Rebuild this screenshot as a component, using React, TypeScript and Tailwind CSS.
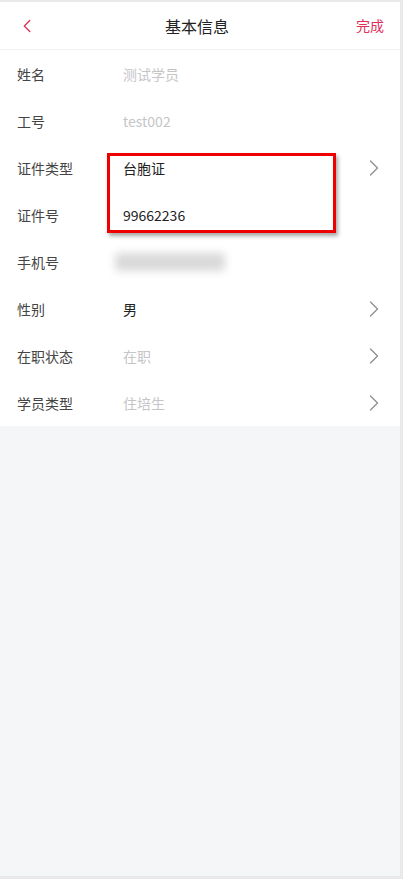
import { ChevronLeft, ChevronRight } from 'lucide-react';

type Row = {
  label: string;
  value?: string;
  muted?: boolean;
  arrow?: boolean;
  blurred?: boolean;
};

const rows: Row[] = [
  { label: '姓名', value: '测试学员', muted: true },
  { label: '工号', value: 'test002', muted: true },
  { label: '证件类型', value: '台胞证', arrow: true },
  { label: '证件号', value: '99662236' },
  { label: '手机号', blurred: true },
  { label: '性别', value: '男', arrow: true },
  { label: '在职状态', value: '在职', muted: true, arrow: true },
  { label: '学员类型', value: '住培生', muted: true, arrow: true },
];

export default function App() {
  return (
    <div
      className="w-[403px] h-[879px] bg-[#e9e9eb] pt-[2px] pb-[3px] pr-[3px]"
      style={{ fontFamily: '"Noto Sans CJK SC", "Noto Sans", sans-serif' }}
    >
      <div className="relative w-[400px] h-full bg-[#f5f6f8]">
        {/* Header */}
        <header className="h-[48px] bg-white border-b border-[#f1f1f3] flex items-center justify-between px-[16px]">
          <ChevronLeft className="w-[22px] h-[22px] text-[#e0305a]" strokeWidth={1.4} />
          <h1 className="text-[16px] text-[#222]">基本信息</h1>
          <span className="text-[14px] text-[#e0305a]">完成</span>
        </header>

        {/* Form rows */}
        <div className="bg-white">
          {rows.map((r) => (
            <div key={r.label} className="h-[47px] flex items-center pl-[17px] pr-[12px]">
              <span className="block w-[106px] text-[14px] leading-[20px] text-[#444]">{r.label}</span>
              <div className="flex-1 flex items-center">
                {r.blurred ? (
                  <div className="ml-[-8px] w-[110px] h-[18px] bg-[#d9d9d9] rounded-[4px] blur-[4px]" />
                ) : (
                  <span
                    className={`block text-[14px] leading-[20px] ${r.muted ? 'text-[#c5c5c8]' : 'text-[#222]'}`}
                  >
                    {r.value}
                  </span>
                )}
              </div>
              {r.arrow && (
                <ChevronRight className="w-[28px] h-[28px] text-[#8e8e93]" strokeWidth={1.1} />
              )}
            </div>
          ))}
        </div>

        {/* Annotation box */}
        <div className="absolute left-[107px] top-[151px] w-[229px] h-[80px] border-[3px] border-[#ee0000] shadow-[2px_3px_4px_rgba(0,0,0,0.35)]" />
      </div>
    </div>
  );
}
